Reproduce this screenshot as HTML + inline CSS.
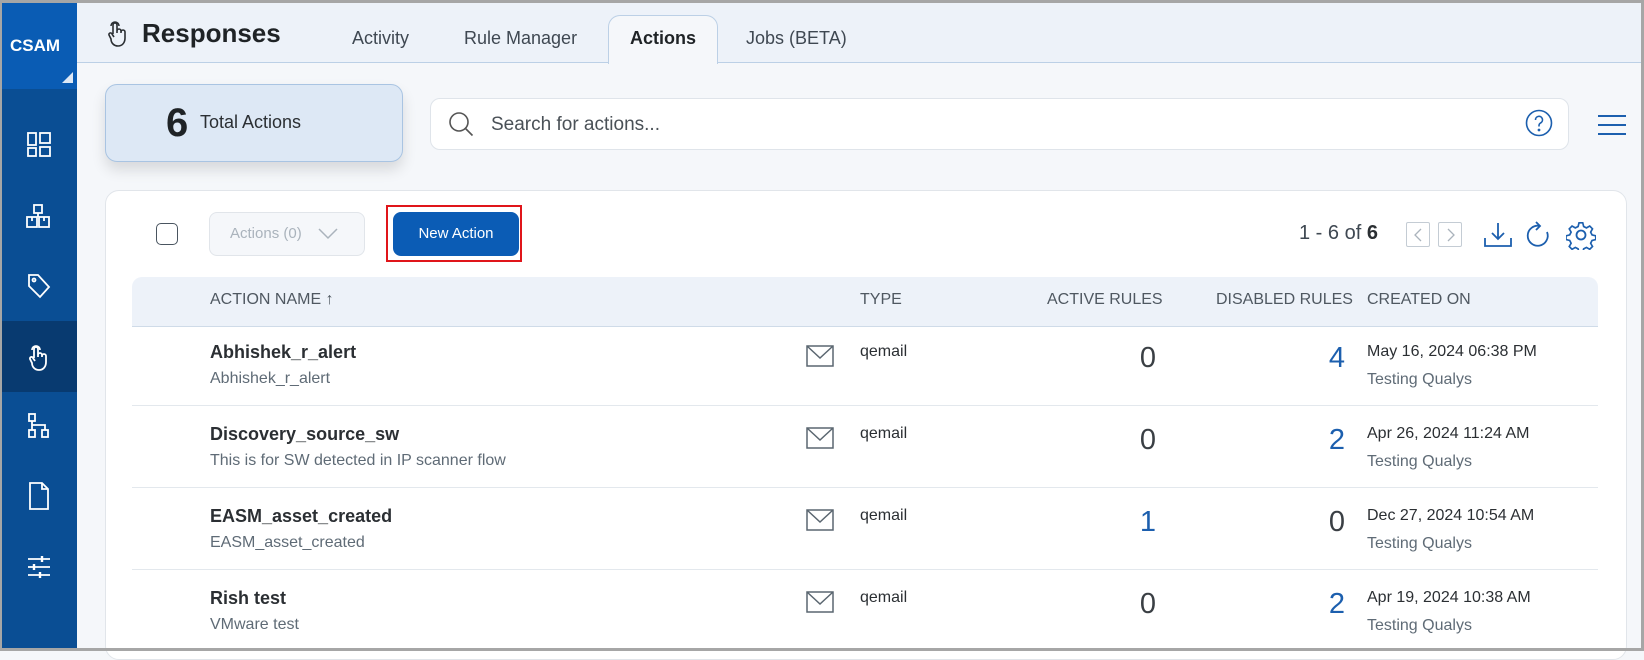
<!DOCTYPE html>
<html><head><meta charset="utf-8"><style>
*{box-sizing:border-box;margin:0;padding:0}
body{width:1644px;height:651px;overflow:hidden;background:#f5f7fa;font-family:"Liberation Sans",sans-serif;position:relative;color:#2b2f33}
.a{position:absolute}
.sb{left:0;top:0;width:77px;height:651px;background:#0a4e94}
.ic{left:0;width:77px;display:flex;justify-content:center;align-items:center}
.ic svg{fill:none;stroke:#fff;stroke-width:1.8}
.hdr{left:77px;top:0;width:1567px;height:63px;background:#edf2f9;border-bottom:1px solid #bcd0e6}
.tab{top:28px;font-size:18px;color:#3f4852}
.th{top:291px;font-size:16px;color:#4f5861}
.t1{font-size:18px;font-weight:bold;color:#2b2f33}
.t2{font-size:16px;color:#5f6b76}
.num{font-size:29px;color:#3a3f44;text-align:right;width:40px}
.blue{color:#1c5fae}
.line{left:132px;width:1466px;height:1px;background:#e3e8ed}
</style></head><body>
<div class="a" style="left:0;top:0;width:1644px;height:3px;background:#a6a6a6;z-index:9"></div>
<div class="a" style="left:0;top:0;width:2px;height:651px;background:#a6a6a6;z-index:9"></div>
<div class="a" style="left:0;top:648px;width:1644px;height:3px;background:#a6a6a6;z-index:9"></div>
<div class="a" style="left:1641px;top:0;width:3px;height:651px;background:#a6a6a6;z-index:9"></div>
<div class="a sb"></div>
<div class="a" style="left:0;top:3px;width:77px;height:86px;background:#0a5cb4"></div>
<div class="a" style="left:10px;top:36px;color:#fff;font-weight:bold;font-size:17px">CSAM</div>
<div class="a" style="left:62px;top:72px;width:0;height:0;border-left:11px solid transparent;border-bottom:11px solid #dde8f5"></div>
<div class="a" style="left:0;top:321px;width:77px;height:71px;background:#083a70"></div>
<div class="a ic" style="top:130px;height:30px"><svg width="26" height="26" viewBox="0 0 26 26"><rect x="2" y="1" width="8" height="12"/><rect x="2" y="16" width="8" height="8"/><rect x="14" y="1" width="10" height="10"/><rect x="14" y="15" width="10" height="9"/></svg></div>
<div class="a ic" style="top:202px;height:30px"><svg width="26" height="26" viewBox="0 0 26 26"><rect x="8" y="1" width="8" height="8"/><rect x="1" y="13" width="10" height="10"/><rect x="13" y="13" width="10" height="10"/><path d="M12 9v4M6 13v4M18 13v4"/></svg></div>
<div class="a ic" style="top:271px;height:30px"><svg width="26" height="26" viewBox="0 0 26 26"><path d="M3 2h9l11 12-9 10L3 13z"/><circle cx="8" cy="7" r="1.5"/></svg></div>
<div class="a ic" style="top:342px;height:30px"><svg width="24" height="28" viewBox="0 0 24 28"><path d="M7 15V6a2 2 0 0 1 4 0v8M11 12a2 2 0 0 1 4 0v2M15 13a2 2 0 0 1 4 0v6c0 5-3 8-7 8s-7-3-7-7l-2-4a1.5 1.5 0 0 1 3-1l2 3"/><path d="M5 7a4 4 0 0 1 8 0"/></svg></div>
<div class="a ic" style="top:411px;height:30px"><svg width="26" height="26" viewBox="0 0 26 26"><rect x="3" y="1" width="6" height="7"/><rect x="3" y="17" width="6" height="7"/><rect x="16" y="17" width="6" height="7"/><path d="M6 8v9M6 12h13v5"/></svg></div>
<div class="a ic" style="top:481px;height:30px"><svg width="24" height="28" viewBox="0 0 24 28"><path d="M3 1h12l6 6v20H3z"/><path d="M15 1v6h6"/></svg></div>
<div class="a ic" style="top:552px;height:30px"><svg width="26" height="24" viewBox="0 0 26 24"><path d="M2 4h22M2 12h22M2 20h22"/><path d="M16 1v6M8 9v6M14 17v6" stroke-width="2.4"/></svg></div>

<div class="a hdr"></div>
<svg class="a" style="left:107px;top:19px" width="20" height="28" viewBox="0 0 20 28" fill="none" stroke="#2b2f33" stroke-width="1.6"><path d="M6 15V6a2 2 0 0 1 4 0v8M10 12a2 2 0 0 1 4 0v2M14 13a2 2 0 0 1 4 0v6c0 5-3 8-7 8s-7-3-7-7l-2-4a1.5 1.5 0 0 1 3-1l2 3"/><path d="M4 7a4 4 0 0 1 8 0"/></svg>
<div class="a" style="left:142px;top:18px;font-size:26px;font-weight:bold;color:#1f2326">Responses</div>
<div class="a tab" style="left:352px">Activity</div>
<div class="a tab" style="left:464px">Rule Manager</div>
<div class="a" style="left:608px;top:15px;width:110px;height:49px;background:#f5f7fa;border:1px solid #bcd0e6;border-bottom:none;border-radius:12px 12px 0 0"></div>
<div class="a tab" style="left:630px;font-weight:bold;color:#1f2326">Actions</div>
<div class="a tab" style="left:746px">Jobs (BETA)</div>

<div class="a" style="left:105px;top:84px;width:298px;height:78px;background:#dde8f5;border:1px solid #a9c4e2;border-radius:12px;box-shadow:0 8px 14px rgba(0,0,0,.12)"></div>
<div class="a" style="left:166px;top:101px;font-size:40px;font-weight:bold;color:#1f2326">6</div>
<div class="a" style="left:200px;top:112px;font-size:18px;color:#2b2f33">Total Actions</div>

<div class="a" style="left:430px;top:98px;width:1139px;height:52px;background:#fff;border:1px solid #dfe4ea;border-radius:10px"></div>
<svg class="a" style="left:447px;top:110px" width="30" height="30" viewBox="0 0 30 30" fill="none" stroke="#555" stroke-width="1.6"><circle cx="12" cy="12" r="9"/><path d="M18.5 18.5l7 7"/></svg>
<div class="a" style="left:491px;top:114px;font-size:19px;color:#4a5157">Search for actions...</div>
<svg class="a" style="left:1525px;top:109px" width="28" height="28" viewBox="0 0 28 28" fill="none" stroke="#1c5fae" stroke-width="1.6"><circle cx="14" cy="14" r="12.5"/><path d="M10.5 11a3.5 3.5 0 1 1 5 3c-1 .6-1.5 1.2-1.5 2.5v1"/><circle cx="14" cy="21" r=".6" fill="#1c5fae"/></svg>
<svg class="a" style="left:1598px;top:114px" width="28" height="22" viewBox="0 0 28 22" stroke="#1c5fae" stroke-width="2"><path d="M0 2h28M0 11h28M0 20h28"/></svg>

<div class="a" style="left:105px;top:190px;width:1522px;height:470px;background:#fff;border:1px solid #e1e5ea;border-radius:14px"></div>
<div class="a" style="left:156px;top:223px;width:22px;height:22px;border:1.5px solid #4a5560;border-radius:5px"></div>
<div class="a" style="left:209px;top:212px;width:156px;height:44px;background:#f5f7fa;border:1px solid #e1e5ea;border-radius:8px"></div>
<div class="a" style="left:230px;top:225px;font-size:15px;color:#aab3bc">Actions (0)</div>
<svg class="a" style="left:318px;top:228px" width="20" height="12" viewBox="0 0 20 12" fill="none" stroke="#aab3bc" stroke-width="1.5"><path d="M1 1l9 9 9-9"/></svg>
<div class="a" style="left:386px;top:205px;width:136px;height:57px;border:2px solid #e0151a"></div>
<div class="a" style="left:393px;top:212px;width:126px;height:44px;background:#0b5cb5;border-radius:8px;color:#fff;font-size:15px;text-align:center;line-height:44px">New Action</div>

<div class="a" style="left:1299px;top:222px;font-size:20px;color:#3f4852">1 - 6 of <b style="color:#2b2f33">6</b></div>
<div class="a" style="left:1406px;top:222px;width:24px;height:25px;border:1.5px solid #c4ccd4;border-radius:2px"></div>
<svg class="a" style="left:1413px;top:228px" width="10" height="14" viewBox="0 0 10 14" fill="none" stroke="#aab3bc" stroke-width="1.3"><path d="M8 1L2 7l6 6"/></svg>
<div class="a" style="left:1438px;top:222px;width:24px;height:25px;border:1.5px solid #c4ccd4;border-radius:2px"></div>
<svg class="a" style="left:1446px;top:228px" width="10" height="14" viewBox="0 0 10 14" fill="none" stroke="#aab3bc" stroke-width="1.3"><path d="M2 1l6 6-6 6"/></svg>
<svg class="a" style="left:1484px;top:222px" width="28" height="26" viewBox="0 0 28 26" fill="none" stroke="#1c5fae" stroke-width="1.8"><path d="M14 1v16M8 11l6 6 6-6M1 16v8h26v-8"/></svg>
<svg class="a" style="left:1526px;top:221px" width="24" height="28" viewBox="0 0 24 28" fill="none" stroke="#1c5fae" stroke-width="1.8"><path d="M14 5a10 10 0 1 0 7 6"/><path d="M10 1l4 4-4 4"/></svg>
<svg class="a" style="left:1566px;top:220px" width="30" height="30" viewBox="0 0 30 30" fill="none" stroke="#1c5fae" stroke-width="1.8"><circle cx="15" cy="15" r="4.5"/><path d="M13 2h4l1 4 3 1.5 3.5-2 3 3-2 3.5 1.5 3 4 1v4l-4 1-1.5 3 2 3.5-3 3-3.5-2-3 1.5-1 4h-4l-1-4-3-1.5-3.5 2-3-3 2-3.5-1.5-3-4-1v-4l4-1 1.5-3-2-3.5 3-3 3.5 2 3-1.5z" transform="scale(.93) translate(1 1)"/></svg>

<div class="a" style="left:132px;top:277px;width:1466px;height:50px;background:#edf2f9;border-radius:10px 10px 0 0;border-bottom:1px solid #cfdbe8"></div>
<div class="a th" style="left:210px">ACTION NAME ↑</div>
<div class="a th" style="left:860px">TYPE</div>
<div class="a th" style="left:1047px">ACTIVE RULES</div>
<div class="a th" style="left:1216px">DISABLED RULES</div>
<div class="a th" style="left:1367px">CREATED ON</div>

<div class="a line" style="top:405px"></div>
<div class="a line" style="top:487px"></div>
<div class="a line" style="top:569px"></div>

<!-- rows -->
<div class="a t1" style="left:210px;top:342px">Abhishek_r_alert</div>
<div class="a t2" style="left:210px;top:370px">Abhishek_r_alert</div>
<div class="a t1" style="left:210px;top:424px">Discovery_source_sw</div>
<div class="a t2" style="left:210px;top:452px">This is for SW detected in IP scanner flow</div>
<div class="a t1" style="left:210px;top:506px">EASM_asset_created</div>
<div class="a t2" style="left:210px;top:534px">EASM_asset_created</div>
<div class="a t1" style="left:210px;top:588px">Rish test</div>
<div class="a t2" style="left:210px;top:616px">VMware test</div>

<svg class="a" style="left:806px;top:345px" width="28" height="22" viewBox="0 0 28 22" fill="none" stroke="#5a6670" stroke-width="1.5"><rect x="1" y="1" width="26" height="20"/><path d="M1 1l13 12L27 1"/></svg>
<svg class="a" style="left:806px;top:427px" width="28" height="22" viewBox="0 0 28 22" fill="none" stroke="#5a6670" stroke-width="1.5"><rect x="1" y="1" width="26" height="20"/><path d="M1 1l13 12L27 1"/></svg>
<svg class="a" style="left:806px;top:509px" width="28" height="22" viewBox="0 0 28 22" fill="none" stroke="#5a6670" stroke-width="1.5"><rect x="1" y="1" width="26" height="20"/><path d="M1 1l13 12L27 1"/></svg>
<svg class="a" style="left:806px;top:591px" width="28" height="22" viewBox="0 0 28 22" fill="none" stroke="#5a6670" stroke-width="1.5"><rect x="1" y="1" width="26" height="20"/><path d="M1 1l13 12L27 1"/></svg>

<div class="a" style="left:860px;top:343px;font-size:16px">qemail</div>
<div class="a" style="left:860px;top:425px;font-size:16px">qemail</div>
<div class="a" style="left:860px;top:507px;font-size:16px">qemail</div>
<div class="a" style="left:860px;top:589px;font-size:16px">qemail</div>

<div class="a num" style="left:1116px;top:342px">0</div>
<div class="a num" style="left:1116px;top:424px">0</div>
<div class="a num blue" style="left:1116px;top:506px">1</div>
<div class="a num" style="left:1116px;top:588px">0</div>
<div class="a num blue" style="left:1305px;top:342px">4</div>
<div class="a num blue" style="left:1305px;top:424px">2</div>
<div class="a num" style="left:1305px;top:506px">0</div>
<div class="a num blue" style="left:1305px;top:588px">2</div>

<div class="a" style="left:1367px;top:343px;font-size:16px">May 16, 2024 06:38 PM</div>
<div class="a t2" style="left:1367px;top:371px">Testing Qualys</div>
<div class="a" style="left:1367px;top:425px;font-size:16px">Apr 26, 2024 11:24 AM</div>
<div class="a t2" style="left:1367px;top:453px">Testing Qualys</div>
<div class="a" style="left:1367px;top:507px;font-size:16px">Dec 27, 2024 10:54 AM</div>
<div class="a t2" style="left:1367px;top:535px">Testing Qualys</div>
<div class="a" style="left:1367px;top:589px;font-size:16px">Apr 19, 2024 10:38 AM</div>
<div class="a t2" style="left:1367px;top:617px">Testing Qualys</div>
</body></html>
